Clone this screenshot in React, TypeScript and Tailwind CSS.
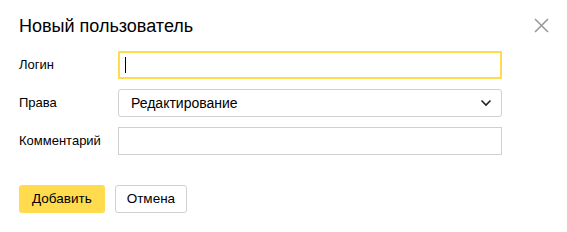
import React from "react";

export default function App() {
  return (
    <div className="w-[567px] h-[232px] bg-white font-['Liberation_Sans',Arial,sans-serif] text-[#000] relative">
      <div className="pl-[19px] pr-[65px] pt-[14px]">
        <h1 className="text-[18px] leading-[24px] text-black">Новый пользователь</h1>
        <div className="mt-[13px] flex flex-col gap-[10px]">
          <div className="flex items-center">
            <div className="w-[99px] text-[13px] text-black">Логин</div>
            <div className="flex-1 h-[28px] border-2 border-[#ffdb4d] flex items-center pl-[5px]">
              <div className="w-[1px] h-[16px] bg-black" />
            </div>
          </div>
          <div className="flex items-center">
            <div className="w-[99px] text-[13px] text-black">Права</div>
            <div className="flex-1 h-[28px] border border-[#d0d0d0] rounded-[3px] flex items-center justify-between pl-[12px] pr-[9px]">
              <span className="text-[14px] text-black">Редактирование</span>
              <svg width="12" height="8" viewBox="0 0 12 8" fill="none">
                <path d="M1.5 1.5 L6 6 L10.5 1.5" stroke="#222" strokeWidth="1.6" />
              </svg>
            </div>
          </div>
          <div className="flex items-center">
            <div className="w-[99px] text-[13px] text-black">Комментарий</div>
            <div className="flex-1 h-[28px] border border-[#d0d0d0]" />
          </div>
        </div>
        <div className="mt-[30px] flex gap-[10px]">
          <button className="h-[28px] px-[13px] bg-[#ffdb4d] rounded-[3px] text-[13.5px] text-black">Добавить</button>
          <button className="h-[28px] px-[11px] bg-white border border-[#d0d0d0] rounded-[3px] text-[13.5px] text-black">Отмена</button>
        </div>
      </div>
      <button className="absolute left-[534px] top-[18px] w-[15px] h-[15px]">
        <svg width="15" height="15" viewBox="0 0 15 15" fill="none">
          <path d="M1 1 L14 14 M14 1 L1 14" stroke="#9a9a9a" strokeWidth="1.6" />
        </svg>
      </button>
    </div>
  );
}
